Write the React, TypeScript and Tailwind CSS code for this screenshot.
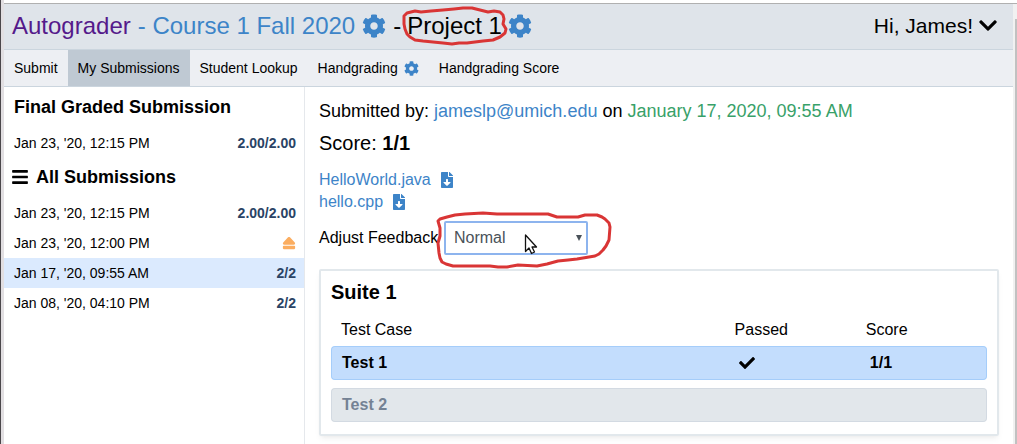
import { FaBars, FaCheck, FaChevronDown, FaCog, FaEject, FaFileDownload } from "react-icons/fa";

type Submission = { date: string; score: string | null; selected?: boolean };

const submissions: Submission[] = [
  { date: "Jan 23, '20, 12:15 PM", score: "2.00/2.00" },
  { date: "Jan 23, '20, 12:00 PM", score: null },
  { date: "Jan 17, '20, 09:55 AM", score: "2/2", selected: true },
  { date: "Jan 08, '20, 04:10 PM", score: "2/2" },
];

const files = ["HelloWorld.java", "hello.cpp"];

function SubmissionRow({ date, score, selected }: Submission) {
  return (
    <button
      type="button"
      className={
        "flex w-full items-center justify-between py-1 pr-2 pl-2.5 text-left text-sm leading-[22px] " +
        (selected ? "bg-[#dbeafe]" : "")
      }
    >
      <span>{date}</span>
      {score ? (
        <span className="font-bold text-[#2a4365]">{score}</span>
      ) : (
        <FaEject className="size-3.5 text-[#fbad60]" aria-label="Removed from queue" />
      )}
    </button>
  );
}

function ProjectMark() {
  return (
    <svg
      className="pointer-events-none absolute -top-1 -left-1.5 h-11 w-28"
      viewBox="401 6 112 44"
      fill="none"
      stroke="#d93535"
      strokeWidth="3"
      strokeLinejoin="round"
      aria-hidden="true"
    >
      <path d="M404 17L407 14L415 12L421 13L431 12L443 11L454 10L463 9L472 9L480 11L488 13L494 12L500 13L503 16L504 20L503 25L506 30L505 34L500 38L493 41L483 42L475 43L467 44L459 44L452 45L443 44L433 43L423 42L415 41L410 38L407 35L405 30L404 25L404 17Z" />
    </svg>
  );
}

function SelectMark() {
  return (
    <svg
      className="pointer-events-none absolute -top-3 -left-2.5 h-16 w-45"
      viewBox="434 209 180 64"
      fill="none"
      stroke="#d93535"
      strokeWidth="3"
      strokeLinejoin="round"
      aria-hidden="true"
    >
      <path d="M438 221L440 219L447 217L455 215L465 214L483 213L497 214L548 214L557 217L578 217L585 215L597 215L602 217L605 219L609 223L610 227L609 240L606 246L603 250L599 254L595 256L577 259L568 260L558 261L547 264L537 266L518 265L507 267L498 267L490 266L453 266L446 264L442 262L440 258L439 253L438 243L440 236L440 228Z" />
      <path
        d="M525.5 235V251.5L529 248L531.5 253.5L534.5 252L532 247H536.5Z"
        fill="#fff"
        stroke="#111"
        strokeWidth="1.3"
      />
    </svg>
  );
}

export default function App() {
  return (
    <div className="flex min-h-screen bg-white font-['Liberation_Sans',Arial,sans-serif] text-black">
      <div className="w-1 shrink-0 border-l border-[#4b474b] bg-[#e2dfe2]" />
      <div className="flex min-w-0 grow flex-col pt-[3px]">
        <header className="flex items-center justify-between border-t border-b border-t-[#b0b0b0] border-b-[#cbd5de] bg-[#dfe4ea] pt-[5px] pr-4 pb-[7px] pl-2">
          <h1 className="flex items-center text-2xl leading-[33px]">
            <a href="#home" className="text-[#551a8b]">Autograder</a>
            <a href="#course" className="ml-[7px] text-[#3d84c8]">- Course 1 Fall 2020</a>
            <a href="#course-settings" aria-label="Course settings" className="ml-[7px] text-[#3d84c8]">
              <FaCog className="size-6" />
            </a>
            <span className="ml-[7px]">-</span>
            <span className="relative ml-[6px]">
              Project 1
              <ProjectMark />
            </span>
            <a href="#project-settings" aria-label="Project settings" className="ml-[6px] text-[#3d84c8]">
              <FaCog className="size-6" />
            </a>
          </h1>
          <button type="button" className="flex items-center gap-1.5 text-[21px] leading-[33px]">
            Hi, James!
            <FaChevronDown className="h-[21px] w-[18px]" />
          </button>
        </header>

        <nav className="flex border-b border-[#cbd5de] bg-[#edeff3] text-sm leading-5">
          <a href="#submit" className="px-2.5 py-2">Submit</a>
          <a href="#submissions" className="bg-[#bfc9d3] px-2.5 py-2">My Submissions</a>
          <a href="#lookup" className="px-2.5 py-2">Student Lookup</a>
          <a href="#handgrading" className="flex items-center gap-1.5 px-2.5 py-2">
            Handgrading
            <FaCog className="size-[15px] text-[#3d84c8]" />
          </a>
          <a href="#handgrading-score" className="px-2.5 py-2">Handgrading Score</a>
        </nav>

        <div className="flex grow">
          <aside className="w-[301px] shrink-0 border-r border-[#e5e8ec]">
            <h2 className="px-2.5 pt-1.5 pb-[7px] text-lg leading-7 font-bold">Final Graded Submission</h2>
            <SubmissionRow {...submissions[0]} />
            <h2 className="flex items-center gap-2 px-2 pt-[5px] pb-[7px] text-lg leading-7 font-bold">
              <FaBars className="h-[18px] w-4" />
              All Submissions
            </h2>
            {submissions.map((s) => (
              <SubmissionRow key={s.date} {...s} />
            ))}
          </aside>

          <main className="min-w-0 grow px-3.5 pt-2.5">
            <p className="text-lg leading-7">
              Submitted by: <span className="text-[#3d84c8]">jameslp@umich.edu</span> on{" "}
              <span className="text-[#38a169]">January 17, 2020, 09:55 AM</span>
            </p>
            <p className="mt-1 text-xl leading-7">
              Score: <b>1/1</b>
            </p>
            <ul className="mt-3 leading-[22px]">
              {files.map((file) => (
                <li key={file} className="flex items-center gap-2.5 text-[#3d84c8]">
                  <a href={"#" + file}>{file}</a>
                  <button type="button" aria-label={"Download " + file}>
                    <FaFileDownload className="h-4 w-3" />
                  </button>
                </li>
              ))}
            </ul>
            <div className="mt-2 flex items-center">
              <label htmlFor="feedback" className="w-[125px]">Adjust Feedback</label>
              <div className="relative">
                <select
                  id="feedback"
                  className="h-[34px] w-36 appearance-none rounded-xs border-2 border-[#8db4ee] bg-white px-2 text-[#4a5259] outline-none"
                >
                  <option>Normal</option>
                </select>
                <svg className="pointer-events-none absolute top-3.5 right-1.5 h-1.5 w-1.5" viewBox="0 0 6 6" aria-hidden="true">
                  <path d="M0 0H6L3 6Z" fill="#4a5259" />
                </svg>
                <SelectMark />
              </div>
            </div>

            <section className="mt-3.5 rounded-xs border-2 border-[#e2e8ec] px-2.5 pt-[7px] pb-1 shadow-md shadow-black/5">
              <h3 className="text-xl leading-7 font-bold">Suite 1</h3>
              <table className="w-full table-fixed border-separate border-spacing-x-0 border-spacing-y-2 text-left">
                <thead>
                  <tr className="leading-6">
                    <th className="w-3/5 px-2.5 pt-1 pb-0 font-normal"><div className="-mb-1">Test Case</div></th>
                    <th className="w-1/5 px-2.5 pt-1 pb-0 font-normal"><div className="-mb-1">Passed</div></th>
                    <th className="w-1/5 px-2.5 pt-1 pb-0 font-normal"><div className="-mb-1">Score</div></th>
                  </tr>
                </thead>
                <tbody className="font-bold">
                  <tr className="h-[34px]">
                    <td className="rounded-l-sm border-y border-l border-[#a5cdfa] bg-[#c3ddfd] px-2.5">Test 1</td>
                    <td className="border-y border-[#a5cdfa] bg-[#c3ddfd] px-3.5">
                      <FaCheck className="size-4" aria-label="Yes" />
                    </td>
                    <td className="rounded-r-sm border-y border-r border-[#a5cdfa] bg-[#c3ddfd] px-3.5">1/1</td>
                  </tr>
                  <tr className="h-[34px] text-[#748294]">
                    <td className="rounded-l-sm border-y border-l border-[#d3dae2] bg-[#e2e7eb] px-2.5">Test 2</td>
                    <td className="border-y border-[#d3dae2] bg-[#e2e7eb]" />
                    <td className="rounded-r-sm border-y border-r border-[#d3dae2] bg-[#e2e7eb]" />
                  </tr>
                </tbody>
              </table>
            </section>
          </main>
        </div>
      </div>
      <div className="mt-[3px] w-1 shrink-0 border-t border-[#b0b0b0] bg-[#f1f1f1] pt-[15px] pl-0.5">
        <div className="h-full bg-[#c1c1c1]" />
      </div>
    </div>
  );
}
